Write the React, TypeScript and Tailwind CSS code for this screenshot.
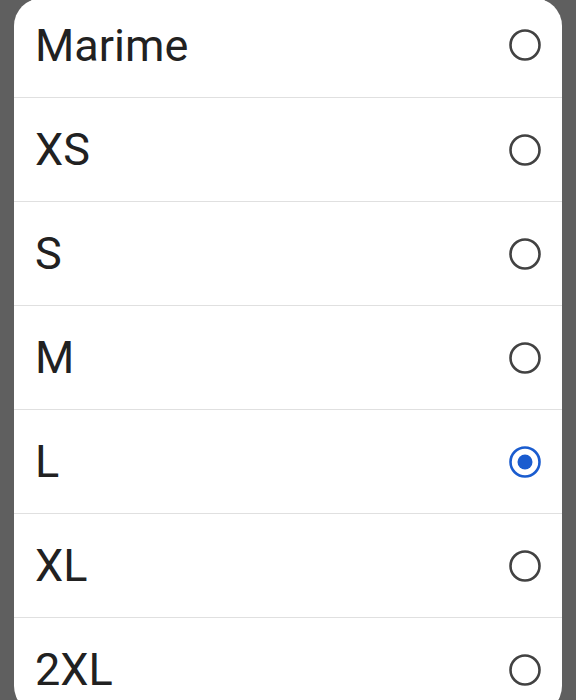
import React, { useState } from "react";

const sizes = ["Marime", "XS", "S", "M", "L", "XL", "2XL", "3XL"];

const Radio = ({ checked }: { checked: boolean }) => (
  <svg width="34" height="34" viewBox="0 0 34 34">
    <circle
      cx="17"
      cy="17"
      r="14.5"
      fill="none"
      stroke={checked ? "#1a5ccf" : "#424242"}
      strokeWidth="2.6"
    />
    {checked && <circle cx="17" cy="17" r="7.5" fill="#1a5ccf" />}
  </svg>
);

export default function App() {
  const [selected, setSelected] = useState("L");

  return (
    <div className="h-[700px] w-[576px] overflow-hidden bg-[#5f5f5f] font-['Roboto',sans-serif]">
      <div className="mx-[14px] -mt-[2px] h-[716px] overflow-hidden rounded-[28px] bg-white">
        {/* size list */}
        <div className="-mt-[5px]">
          {sizes.map((s, i) => (
            <div
              key={s}
              onClick={() => setSelected(s)}
              className={`flex h-[104px] cursor-pointer items-center justify-between pl-[21px] pr-[20px] ${
                i > 0 ? "border-t border-[#e0e0e0]" : ""
              }`}
            >
              <span className="text-[45px] leading-none text-[#212121]">{s}</span>
              <Radio checked={selected === s} />
            </div>
          ))}
        </div>
      </div>
    </div>
  );
}
